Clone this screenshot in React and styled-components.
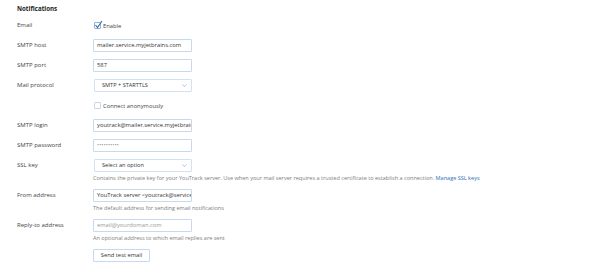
import React from "react";
import styled, { createGlobalStyle } from "styled-components";

const Global = createGlobalStyle`
  html, body { margin: 0; padding: 0; background: #fff; }
  body { font-family: "Open Sans", "Noto Sans", sans-serif; color: #3c3c3c; }
  * { box-sizing: border-box; }
`;

const Page = styled.div`
  padding: 3px 0 0 17px;
  width: 600px;
  height: 266px;
  overflow: hidden;
`;

const Title = styled.div`
  font-size: 6.2px;
  font-weight: 700;
  line-height: 12px;
  height: 12px;
  color: #222;
  margin-bottom: 4px;
`;

const Form = styled.div`
  display: grid;
  grid-template-columns: 76px 1fr;
  row-gap: 7px;
`;

const Label = styled.div`
  font-size: 6px;
  line-height: 13px;
  color: #444;
  white-space: nowrap;
`;

const Field = styled.div`
  display: flex;
  flex-direction: column;
  align-items: flex-start;
`;

const Input = styled.div`
  width: 99px;
  height: 13px;
  border: 1px solid #c5d9f0;
  border-radius: 1px;
  padding: 0 3px;
  font-size: 5.8px;
  line-height: 11px;
  color: ${(p) => (p.$placeholder ? "#9a9a9a" : "#333")};
  white-space: nowrap;
  overflow: hidden;
  background: #fff;
`;

const Select = styled.div`
  width: 98px;
  height: 13px;
  margin-left: 1px;
  border: 1px solid #d2e2f4;
  border-radius: 1px;
  padding: 0 4px 0 7px;
  font-size: 5.6px;
  line-height: 11px;
  color: #333;
  display: flex;
  align-items: center;
  justify-content: space-between;
  white-space: nowrap;
`;

const Chevron = () => (
  <svg width="5" height="3" viewBox="0 0 5 3">
    <path d="M0.5 0.5 L2.5 2.5 L4.5 0.5" fill="none" stroke="#8a9bb0" strokeWidth="0.6" />
  </svg>
);

const CheckRow = styled.label`
  display: flex;
  align-items: center;
  height: 13px;
  gap: 2px;
  font-size: 5.8px;
  color: #444;
  margin-left: 1px;
`;

const Box = styled.span`
  width: 7px;
  height: 7px;
  border: 1px solid ${(p) => (p.$checked ? "#8fb4de" : "#c6d7ea")};
  border-radius: 1px;
  position: relative;
  display: inline-block;
  background: #fff;
`;

const Tick = styled.svg`
  position: absolute;
  left: -1px;
  top: -3px;
`;

const Hint = styled.div`
  font-size: 5.55px;
  line-height: 10px;
  margin-top: 1px;
  margin-bottom: -1px;
  color: #7d7d7d;
  white-space: nowrap;
`;

const Link = styled.a`
  color: #2f6db5;
  text-decoration: none;
`;

const Button = styled.button`
  width: 57px;
  height: 13px;
  border: 1px solid #c5d9f0;
  background: #fff;
  border-radius: 1px;
  font-family: inherit;
  font-size: 5.8px;
  color: #333;
  padding: 0;
  line-height: 11px;
`;

const Check = ({ checked, children }) => (
  <CheckRow>
    <Box $checked={checked}>
      {checked && (
        <Tick width="9" height="9" viewBox="0 0 9 9">
          <path d="M1.5 5 L3.5 7.5 L8 1" fill="none" stroke="#2f6db5" strokeWidth="1.1" />
        </Tick>
      )}
    </Box>
    {children}
  </CheckRow>
);

export default function App() {
  return (
    <>
      <Global />
      <Page>
        <Title>Notifications</Title>
        <Form>
          <Label>Email</Label>
          <Field>
            <Check checked>Enable</Check>
          </Field>

          <Label>SMTP host</Label>
          <Field>
            <Input>mailer.service.myjetbrains.com</Input>
          </Field>

          <Label>SMTP port</Label>
          <Field>
            <Input>587</Input>
          </Field>

          <Label>Mail protocol</Label>
          <Field>
            <Select>
              SMTP + STARTTLS
              <Chevron />
            </Select>
          </Field>

          <Label />
          <Field>
            <Check>Connect anonymously</Check>
          </Field>

          <Label>SMTP login</Label>
          <Field>
            <Input>youtrack@mailer.service.myjetbrains.com</Input>
          </Field>

          <Label>SMTP password</Label>
          <Field>
            <Input $placeholder>••••••••••</Input>
          </Field>

          <Label>SSL key</Label>
          <Field>
            <Select>
              Select an option
              <Chevron />
            </Select>
            <Hint>
              Contains the private key for your YouTrack server. Use when your mail server requires a trusted
              certificate to establish a connection. <Link href="#">Manage SSL keys</Link>
            </Hint>
          </Field>

          <Label>From address</Label>
          <Field>
            <Input>YouTrack server &lt;youtrack@service.myjetbrains.com&gt;</Input>
            <Hint>The default address for sending email notifications</Hint>
          </Field>

          <Label>Reply-to address</Label>
          <Field>
            <Input $placeholder>email@yourdoman.com</Input>
            <Hint>An optional address to which email replies are sent</Hint>
          </Field>

          <Label />
          <Field>
            <Button>Send test email</Button>
          </Field>
        </Form>
      </Page>
    </>
  );
}
